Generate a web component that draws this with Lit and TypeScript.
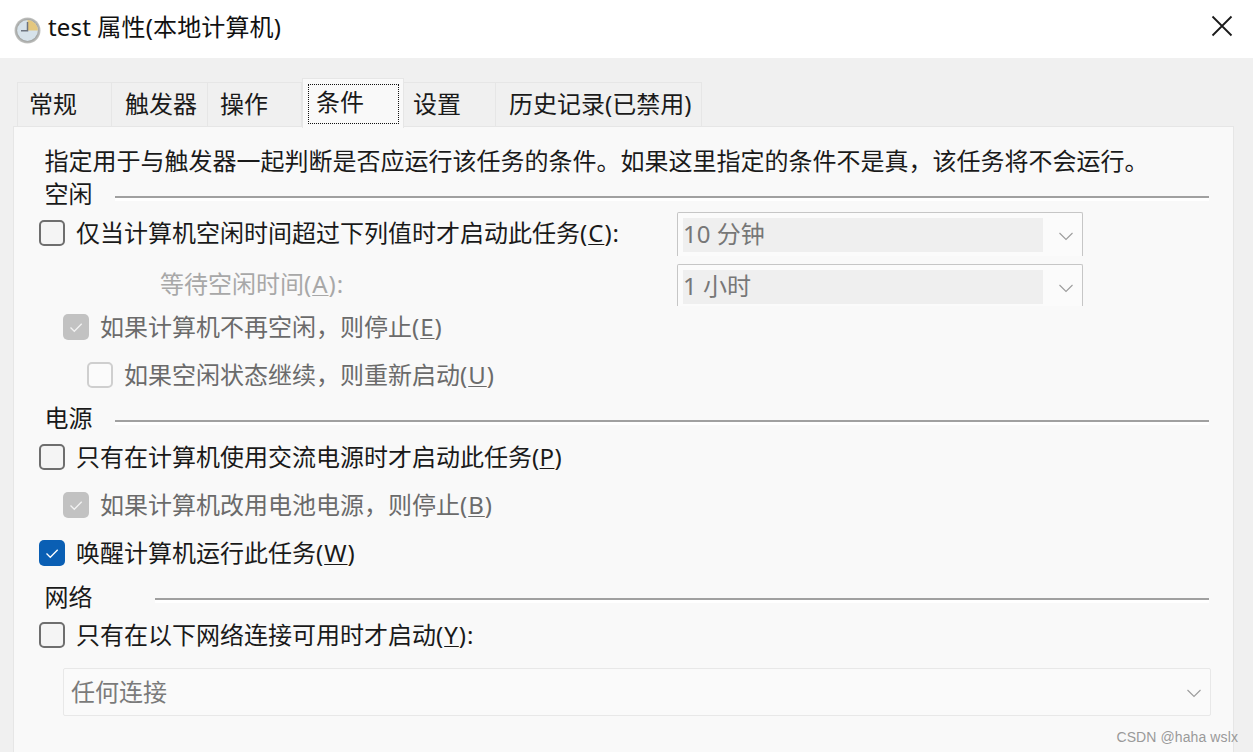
import { LitElement, html, css, svg } from "lit";
import { customElement } from "lit/decorators.js";

type Box = "off" | "dis-on" | "dis-off" | "on";

const check = svg`<svg class="tick" viewBox="0 0 26 26"><path d="M7.5 13.5l3.8 3.8 7.4-7.6" fill="none" stroke="currentColor" stroke-width="1.3"/></svg>`;
const chevron = html`<svg class="chev" viewBox="0 0 14 9"><path d="M.5 1l6.5 6.5L13.5 1" fill="none" stroke="#9c9c9c" stroke-width="1.1"/></svg>`;
const key = (k: string) => html`<span class="key">(<u>${k}</u>)</span>`;

@customElement("app-root")
export class AppRoot extends LitElement {
  static styles = css`
    :host {
      display: block;
      height: 752px;
      overflow: hidden;
      position: relative;
      background: #f0f0f0;
      color: #1a1a1a;
      font-family: "Noto Sans", "Noto Sans CJK SC", sans-serif;
      font-size: 24px;
      line-height: 30px;
    }
    u { text-underline-offset: 2px; text-decoration-thickness: 1px; }
    .key { letter-spacing: 1px; }
    .key-p { letter-spacing: 0.35px; }
    .title {
      height: 58px;
      background: #fff;
      display: flex;
      align-items: center;
      padding: 0 20px 0 14px;
      box-sizing: border-box;
    }
    .title .name { margin-left: 7px; flex: 1; margin-top: -4px; color: #111; letter-spacing: 0.15px; }
    .clock { width: 27px; height: 27px; margin-top: 2px; }
    .close { width: 22px; height: 22px; margin-top: -6px; }
    .body {
      height: 694px;
      box-sizing: border-box;
      padding: 24px 19px 0 13px;
      display: flex;
      flex-direction: column;
    }
    .tabs {
      display: flex;
      height: 44px;
      padding-left: 4px;
      box-sizing: border-box;
      flex: none;
    }
    .tab {
      box-sizing: border-box;
      height: 44px;
      border: 1px solid #e6e6e6;
      border-bottom: none;
      border-left: none;
      padding-top: 6px;
      white-space: nowrap;
      background: #f0f0f0;
    }
    .tab:first-child { border-left: 1px solid #e6e6e6; }
    .t1 { width: 95px; padding-left: 11px; }
    .t2 { width: 96px; padding-left: 13px; }
    .t3 { width: 94px; padding-left: 12px; }
    .t5 { width: 92px; padding-left: 9px; }
    .t6 { width: 206px; padding-left: 13px; }
    .tab.active {
      width: 102px;
      height: 50px;
      margin-top: -4px;
      background: #f9f9f9;
      border: 1px solid #e6e6e6;
      border-bottom: none;
      position: relative;
      z-index: 1;
      padding: 5px 4px 0 5px;
    }
    .focus {
      box-sizing: border-box;
      height: 40px;
      border: 1px dotted #111;
      padding-left: 7px;
      line-height: 34px;
    }
    .panel {
      flex: 1;
      background: #f9f9f9;
      border: 1px solid #e6e6e6;
      border-bottom: none;
      padding: 23px 24px 0 30px;
      display: flex;
      flex-direction: column;
    }
    .desc {
      height: 24px;
      line-height: 22px;
      white-space: nowrap;
      margin-left: 0.5px;
    }
    .section {
      height: 30px;
      display: flex;
      align-items: center;
      color: #1a1a1a;
      margin-left: 0.5px;
    }
    .section .rule {
      flex: 1;
      height: 2px;
      background: #a0a0a0;
      border-bottom: 3px solid #fff;
      margin: 9px 0 0 22.5px;
    }
    .s-idle { margin-top: 5px; }
    .s-power { margin-top: 13px; }
    .s-net { margin-top: 14px; }
    .s-net .rule { margin: 7px 0 0 62.5px; }
    .row {
      height: 30px;
      display: flex;
      align-items: center;
      white-space: nowrap;
      margin-top: 18px;
    }
    .after { margin-top: 8px; }
    .s-power + .after { margin-top: 9px; }
    .grid {
      margin-top: 3px;
      display: grid;
      grid-template-columns: 638px 406px;
      grid-template-rows: 44px 42px;
      row-gap: 8px;
      margin-left: -5px;
      margin-bottom: 6px;
    }
    .grid .row { margin-top: 0; height: 42px; align-self: start; }
    .grid .wait { padding-left: 121px; color: #a8a8a8; height: 39px; }
    .i0 { margin-left: -5px; }
    .i1 { margin-left: 19px; }
    .i2 { margin-left: 43px; }
    .first { margin-top: 0; }
    .box {
      box-sizing: border-box;
      width: 26px;
      height: 26px;
      border-radius: 5px;
      margin-right: 11px;
      flex: none;
      border: 2px solid #6e6e6e;
      background: #f4f4f4;
    }
    .box .tick { display: block; width: 26px; height: 26px; }
    .dis-on { border: none; background: #c2c2c2; color: #f2f2f2; }
    .dis-off { border-color: #cfcfcf; background: #fbfbfb; }
    .on { border: none; background: #0a5fb4; color: #fff; }
    .dim { color: #6b6b6b; }
    .combo {
      box-sizing: border-box;
      border: 1px solid #c6c6c6;
      border-bottom: none;
      border-radius: 2px 2px 0 0;
      background: #fbfbfb;
      padding: 5px 9px 0 5px;
      display: flex;
      align-items: flex-start;
      color: #777;
    }
    .combo .val {
      flex: 1;
      height: 34px;
      line-height: 32px;
      background: #efefef;
    }
    .chev { width: 14px; height: 9px; margin: 14px 0 0 16px; flex: none; }
    .drop {
      box-sizing: border-box;
      height: 48px;
      margin: 18px -2px 0 19px;
      border: 1px solid #e8e8e8;
      border-radius: 2px;
      background: #fafafa;
      display: flex;
      align-items: center;
      padding: 0 9px 0 7px;
      color: #7b7b7b;
    }
    .drop .val { flex: 1; }
    .drop .chev { margin: 2px 0 0 0; }
    .mark {
      position: absolute;
      right: 15px;
      top: 728px;
      font: 14px/18px "Liberation Sans", sans-serif;
      color: #9a9a9a;
      letter-spacing: 0.1px;
    }
  `;

  private box(kind: Box) {
    const ticked = kind === "on" || kind === "dis-on";
    return html`<span class="box ${kind === "off" ? "" : kind}">${ticked ? check : ""}</span>`;
  }

  private clock() {
    return html`<svg class="clock" viewBox="0 0 27 27">
      <defs>
        <radialGradient id="ring"><stop offset="0.7" stop-color="#8f918f" /><stop offset="1" stop-color="#c4c5c3" /></radialGradient>
      </defs>
      <circle cx="13.5" cy="13.5" r="13" fill="url(#ring)" />
      <circle cx="13.5" cy="13.5" r="10.4" fill="#d6e2ea" />
      <path d="M13.5 3.1a10.4 10.4 0 0 1 10.4 10.4H13.5z" fill="#e4c77e" />
      <path d="M13.5 5v8.8H7" fill="none" stroke="#6c7480" stroke-width="1.5" />
    </svg>`;
  }

  render() {
    return html`
      <div class="title">
        ${this.clock()}
        <span class="name">test 属性(本地计算机)</span>
        <svg class="close" viewBox="0 0 22 22"><path d="M1.5 1.5l19 19M20.5 1.5l-19 19" stroke="#1a1a1a" stroke-width="1.8" fill="none" /></svg>
      </div>
      <div class="body">
        <div class="tabs">
          <div class="tab t1">常规</div>
          <div class="tab t2">触发器</div>
          <div class="tab t3">操作</div>
          <div class="tab active"><div class="focus">条件</div></div>
          <div class="tab t5">设置</div>
          <div class="tab t6">历史记录(已禁用)</div>
        </div>
        <div class="panel">
          <div class="desc">指定用于与触发器一起判断是否应运行该任务的条件。如果这里指定的条件不是真，该任务将不会运行。</div>
          <div class="section s-idle"><span>空闲</span><span class="rule"></span></div>
          <div class="grid">
            <div class="row">${this.box("off")}<span>仅当计算机空闲时间超过下列值时才启动此任务${key("C")}:</span></div>
            <div class="combo"><span class="val">10 分钟</span>${chevron}</div>
            <div class="row wait"><span>等待空闲时间${key("A")}:</span></div>
            <div class="combo"><span class="val">1 小时</span>${chevron}</div>
          </div>
          <div class="row i1 dim first">${this.box("dis-on")}<span>如果计算机不再空闲，则停止${key("E")}</span></div>
          <div class="row i2 dim">${this.box("dis-off")}<span>如果空闲状态继续，则重新启动${key("U")}</span></div>
          <div class="section s-power"><span>电源</span><span class="rule"></span></div>
          <div class="row i0 after">${this.box("off")}<span>只有在计算机使用交流电源时才启动此任务<span class="key-p">(<u>P</u>)</span></span></div>
          <div class="row i1 dim">${this.box("dis-on")}<span>如果计算机改用电池电源，则停止${key("B")}</span></div>
          <div class="row i0">${this.box("on")}<span>唤醒计算机运行此任务${key("W")}</span></div>
          <div class="section s-net"><span>网络</span><span class="rule"></span></div>
          <div class="row i0 after">${this.box("off")}<span>只有在以下网络连接可用时才启动${key("Y")}:</span></div>
          <div class="drop"><span class="val">任何连接</span>${chevron}</div>
        </div>
      </div>
      <div class="mark">CSDN @haha wslx</div>
    `;
  }
}
